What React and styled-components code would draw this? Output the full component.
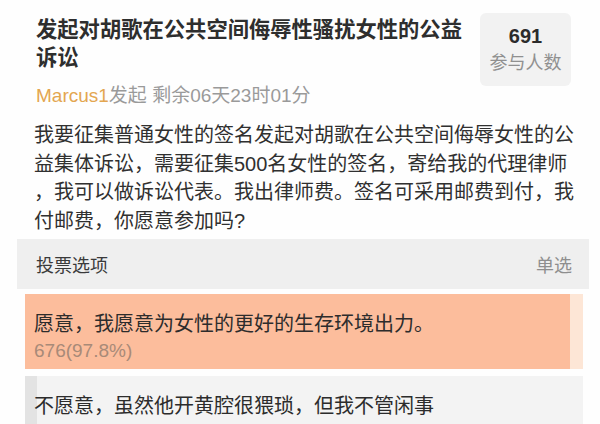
import React from "react";
import styled, { createGlobalStyle } from "styled-components";

const Global = createGlobalStyle`
  html, body { margin: 0; padding: 0; background: #fff; }
  body { font-family: "Liberation Sans", "Noto Sans CJK SC", sans-serif; color: #333; }
`;

const Page = styled.div`
  width: 600px;
  height: 424px;
  overflow: hidden;
  background: #fefefe;
`;

const Header = styled.div`
  display: flex;
  justify-content: space-between;
  align-items: flex-start;
  padding: 13px 29px 0 36px;
`;

const Title = styled.h1`
  margin: 3px 0 0;
  width: 432px;
  font-size: 21.3px;
  line-height: 28px;
  font-weight: 700;
  color: #2e2e2e;
`;

const CountBox = styled.div`
  width: 91px;
  height: 73px;
  border-radius: 6px;
  background: #f2f2f2;
  display: flex;
  flex-direction: column;
  align-items: center;
  justify-content: center;
`;

const CountNum = styled.div`
  font-size: 20px;
  font-weight: 700;
  line-height: 27px;
  color: #2b2b2b;
`;

const CountLabel = styled.div`
  font-size: 18px;
  line-height: 26px;
  color: #909090;
`;

const Meta = styled.div`
  padding: 0 0 0 36px;
  margin-top: -3px;
  font-size: 19px;
  line-height: 26px;
  color: #9a9a9a;
`;

const Author = styled.span`
  color: #e3a650;
`;

const Body = styled.p`
  margin: 12px 0 0;
  padding-left: 34px;
  width: 546px;
  font-size: 20px;
  line-height: 28.5px;
  color: #303030;
  line-break: anywhere;
`;

const VoteHeader = styled.div`
  margin: 4px 11px 0 17px;
  height: 50px;
  padding: 0 17px 0 19px;
  background: #efefef;
  display: flex;
  justify-content: space-between;
  align-items: center;
  font-size: 18px;
  color: #3a3a3a;
`;

const Mode = styled.span`
  color: #8e8e8e;
`;

const Options = styled.div`
  margin: 5px 17px 0 25px;
  display: flex;
  flex-direction: column;
  gap: 7px;
`;

const Option = styled.div`
  position: relative;
  height: 75px;
  background: ${(p) => (p.$hot ? "#fde6d6" : "#f3f3f3")};
  overflow: hidden;
`;

const Fill = styled.div`
  position: absolute;
  left: 0;
  top: 0;
  bottom: 0;
  background: ${(p) => (p.$hot ? "#fcbd9c" : "#e3e3e3")};
`;

const OptionContent = styled.div`
  position: relative;
  padding: 16px 0 0 9px;
  display: flex;
  flex-direction: column;
`;

const OptionText = styled.div`
  font-size: 20px;
  line-height: 28px;
  color: #2c2c2c;
`;

const OptionCount = styled.div`
  font-size: 19px;
  line-height: 25px;
  color: #a88a78;
`;

const options = [
  { text: "愿意，我愿意为女性的更好的生存环境出力。", count: "676(97.8%)", pct: 97.7, hot: true },
  { text: "不愿意，虽然他开黄腔很猥琐，但我不管闲事", pct: 2.2, hot: false },
];

export default function App() {
  return (
    <Page>
      <Global />
      <Header>
        <Title>发起对胡歌在公共空间侮辱性骚扰女性的公益诉讼</Title>
        <CountBox>
          <CountNum>691</CountNum>
          <CountLabel>参与人数</CountLabel>
        </CountBox>
      </Header>
      <Meta>
        <Author>Marcus1</Author>发起 剩余06天23时01分
      </Meta>
      <Body>
        我要征集普通女性的签名发起对胡歌在公共空间侮辱女性的公益集体诉讼，需要征集500名女性的签名，寄给我的代理律师，我可以做诉讼代表。我出律师费。签名可采用邮费到付，我付邮费，你愿意参加吗?
      </Body>
      <VoteHeader>
        <span>投票选项</span>
        <Mode>单选</Mode>
      </VoteHeader>
      <Options>
        {options.map((o) => (
          <Option key={o.text} $hot={o.hot}>
            <Fill $hot={o.hot} style={{ width: `${o.pct}%` }} />
            <OptionContent>
              <OptionText>{o.text}</OptionText>
              {o.count && <OptionCount>{o.count}</OptionCount>}
            </OptionContent>
          </Option>
        ))}
      </Options>
    </Page>
  );
}
